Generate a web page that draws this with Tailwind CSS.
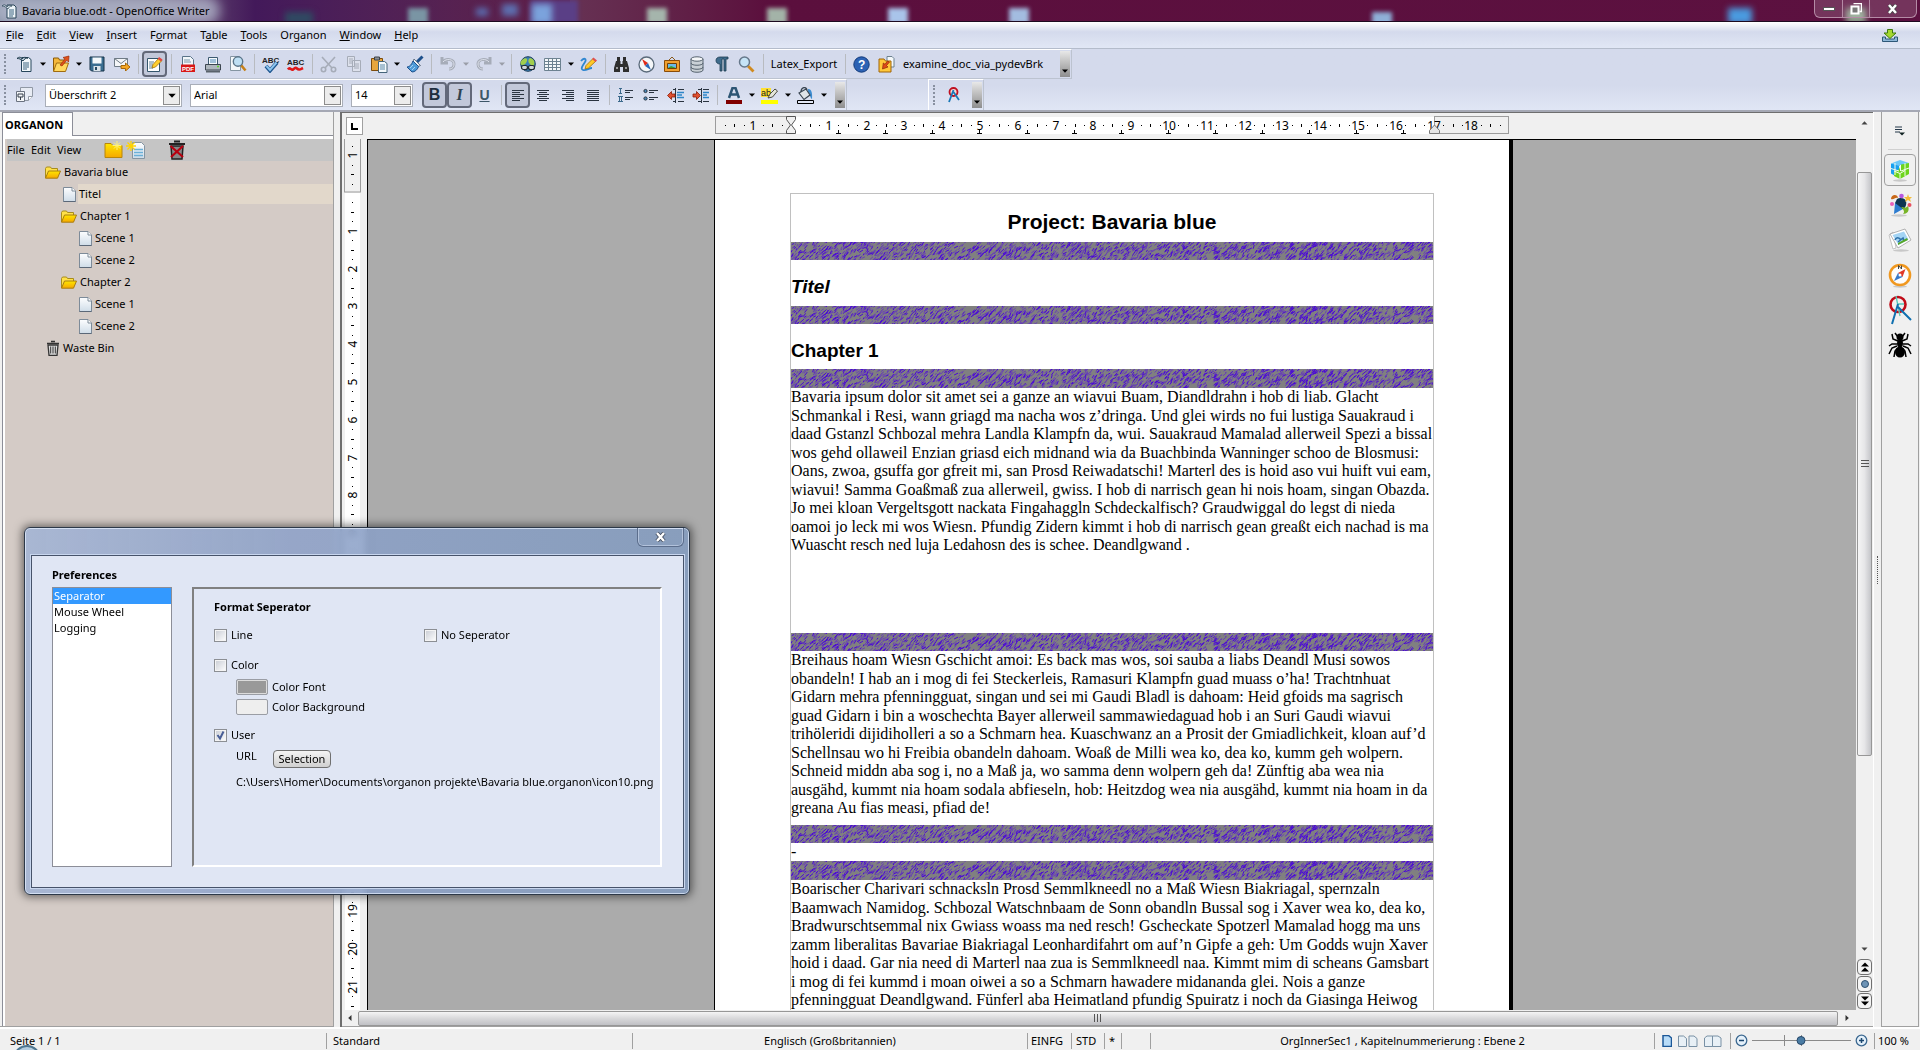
<!DOCTYPE html>
<html lang="en">
<head>
<meta charset="utf-8">
<title>Bavaria blue.odt - OpenOffice Writer</title>
<script src="https://cdn.jsdelivr.net/npm/@tailwindcss/browser@4"></script>
</head>
<body class="h-screen overflow-hidden flex flex-col bg-[#f0f0f0] text-black text-[11px] leading-4 font-['Noto_Sans','Open_Sans',sans-serif]">

<svg width="0" height="0" class="absolute" aria-hidden="true">
  <defs>
    <linearGradient id="gold" x1="0" y1="0" x2="0" y2="1"><stop offset="0" stop-color="#ffe600"/><stop offset="1" stop-color="#f5a800"/></linearGradient>
    <linearGradient id="paper" x1="0" y1="0" x2="0" y2="1"><stop offset="0" stop-color="#fdfeff"/><stop offset="1" stop-color="#cfdce8"/></linearGradient>
  </defs>
  <symbol id="folder" viewBox="0 0 16 13"><path d="M.5 12V2.500L1.500 1h4l1 1.500h6V5" fill="#ffe14a" stroke="#a88c1c"/><path d="M.5 12.200 3.500 5h12l-3 7.200z" fill="url(#gold)" stroke="#a87c10"/></symbol>
  <symbol id="sheet" viewBox="0 0 13 15"><path d="M.5.5h8.500l3.500 3.500v10.500H.5z" fill="url(#paper)" stroke="#7d8b99"/><path d="M9 .5V4h3.500" fill="#fff" stroke="#7d8b99"/><path d="M.5 14.500h12" stroke="#5b6878"/></symbol>
  <symbol id="bin" viewBox="0 0 14 16"><path d="M5 1.500h4M1 3.500h12" stroke="#333" stroke-width="1.500" fill="none"/><path d="M2 5h10l-1 10.300H3z" fill="#ddd" stroke="#333" stroke-width="1.300"/><path d="M4.700 6.500v7M7 6.500v7M9.300 6.500v7" stroke="#333"/></symbol>
  <symbol id="down" viewBox="0 0 6 4"><path d="M0 .5h6L3 3.800z" fill="currentColor"/></symbol>
  <symbol id="texture" viewBox="0 0 642 19"><rect width="642" height="19" fill="#808080"/><g id="strokes" fill="none"></g></symbol>
</svg>

<!-- title bar -->
<header class="relative h-[22px] shrink-0 flex items-center overflow-hidden border-b border-[#1d0a20] bg-linear-to-r from-[#77849a] via-[#5b0f3d] via-40% to-[#5c1140]">
  <div class="absolute inset-0" aria-hidden="true">
    <div class="absolute inset-y-0 left-[150px] w-[420px] bg-linear-to-r from-transparent via-[#43195a] via-25% to-[#5b0f3d]/60"></div>
    <div class="absolute -inset-y-1 -left-2 w-[228px] rounded-full bg-[#b3b8cc]/80 blur-[6px]"></div>
    <div class="absolute top-3 left-[285px] w-7 h-3 bg-[#2f4a62] blur-[3px]"></div>
    <div class="absolute top-2 left-[408px] w-5 h-4 bg-[#7a95a4] blur-[2px]"></div>
    <div class="absolute top-2 left-[476px] w-3 h-2 bg-[#5b6db0] blur-[3px]"></div>
    <div class="absolute top-1 left-[502px] w-4 h-3 bg-[#5d6fb0] blur-[3px]"></div>
    <div class="absolute top-0 left-[530px] w-12 h-6 bg-[#5a3f86] blur-[2px]"></div>
    <div class="absolute top-1 left-[532px] w-5 h-5 bg-[#7ba3dc] blur-[3px]"></div>
    <div class="absolute top-2 left-[647px] w-5 h-4 bg-[#a5b5ac] blur-[2px]"></div>
    <div class="absolute top-2 left-[767px] w-5 h-4 bg-[#a3b3a8] blur-[2px]"></div>
    <div class="absolute top-2 left-[888px] w-5 h-4 bg-[#a9c4ea] blur-[2px]"></div>
    <div class="absolute top-2 left-[1009px] w-5 h-4 bg-[#a3bce0] blur-[2px]"></div>
    <div class="absolute top-3 left-[1372px] w-5 h-4 bg-[#8fb0d8] blur-[2px]"></div>
    <div class="absolute top-2 left-[1728px] w-6 h-4 bg-[#4a9be0] blur-[3px]"></div>
    <div class="absolute top-2 left-[1846px] w-5 h-4 bg-[#8fa68f] blur-[3px]"></div>
  </div>
  <svg class="relative ml-0.5 shrink-0" width="16" height="16" viewBox="0 0 16 16"><path d="M5 2h7l2 2v11H5z" fill="#eef4f8" stroke="#274357"/><path d="M7 7h5M7 9h5M7 11h5M7 13h4" stroke="#3c6580"/><path d="M0 3c2-2 4-1 5 1 1-2 3-2 5-1-2 0-3 1-4 3C4 4 2 3 0 3z" fill="#dfeaf2" stroke="#1e3a4c" stroke-width=".7"/></svg>
  <h1 class="relative ml-1 flex-1">Bavaria blue.odt - OpenOffice Writer</h1>
  <div class="relative self-start mr-[3px] flex h-[18px] rounded-b-md border border-t-0 border-[#b58ba6] bg-white/15 divide-x divide-[#b58ba6]">
    <button class="w-7 grid place-items-center" aria-label="Minimize"><span class="w-3 h-1 bg-white border border-[#555]"></span></button>
    <button class="w-[27px] grid place-items-center" aria-label="Restore"><svg width="12" height="12" viewBox="0 0 12 12"><path d="M3.500.5h8v8h-2" fill="none" stroke="#fff" stroke-width="1.500"/><rect x="1.500" y="3.500" width="7" height="7" fill="#777" stroke="#fff" stroke-width="2"/></svg></button>
    <button class="w-[46px] grid place-items-center" aria-label="Close"><svg width="12" height="10" viewBox="0 0 12 10"><path d="M2 1l7 8M9 1L2 9" stroke="#444" stroke-width="4"/><path d="M2 1l7 8M9 1L2 9" stroke="#fff" stroke-width="2.500"/></svg></button>
  </div>
</header>

<!-- menu bar -->
<nav class="h-[27px] shrink-0 flex items-center border-b border-[#b4bccb] bg-linear-to-b from-white via-[#d4daec] via-38% to-[#e1e7f5]">
  <button class="pl-1.5 pr-[7px]"><u>F</u>ile</button><button class="pl-1.5 pr-[7px]"><u>E</u>dit</button><button class="pl-1.5 pr-[7px]"><u>V</u>iew</button><button class="pl-1.5 pr-[7px]"><u>I</u>nsert</button><button class="pl-1.5 pr-[7px]">F<u>o</u>rmat</button><button class="pl-1.5 pr-[7px]">T<u>a</u>ble</button><button class="pl-1.5 pr-[7px]"><u>T</u>ools</button><button class="pl-1.5 pr-[7px]">Organon</button><button class="pl-1.5 pr-[7px]"><u>W</u>indow</button><button class="pl-1.5 pr-[7px]"><u>H</u>elp</button>
  <button class="ml-auto mr-[22px]" aria-label="Update"><svg width="16" height="13" viewBox="0 0 16 13"><path d="M.5 8h3v2h9V8h3v4.500H.5z" fill="#8fb8d8" stroke="#2e5878"/><path d="M5.500.5h5V4H14L8 9.500 2 4h3.500z" fill="#a6d830" stroke="#3f7a10"/></svg></button>
</nav>

<div class="shrink-0 bg-linear-to-b from-[#d4daec] from-60% to-[#e0e6f5] border-b-2 border-[#a5a8b4]">
<!-- standard toolbar -->
<div class="h-[30px] w-fit flex items-center border-t border-t-white border-b border-r border-[#bcc3d0] pr-px">
  <span class="w-3 h-5 border-l-2 border-dotted border-[#8890a0] ml-1 -mr-1"></span>
  <button class="w-[25px] grid place-items-center" aria-label="New"><svg width="18" height="18" viewBox="0 0 18 18"><path d="M5.500 2.500h7l2.500 2v12H5.500z" fill="#f2f7fa" stroke="#27465c"/><path d="M7 8h6M7 10h6M7 12h6M7 14h4" stroke="#3c6580"/><path d="M1 3.500c2-2 4-1.500 5 .5 1-2 3-2 6-1-2 0-4 1-5 3-2-2-4-2.500-6-2.500z" fill="#c6d6e2" stroke="#1e3a4c"/></svg></button>
  <button class="w-[11px] grid place-items-center" aria-label="New options"><svg width="6" height="4"><use href="#down"/></svg></button>
  <button class="w-[25px] grid place-items-center" aria-label="Open"><svg width="18" height="18" viewBox="0 0 18 18"><path d="M1.500 16V3h5l1 2h5v3" fill="#f5b83a" stroke="#8a5a08"/><path d="M1.500 16.500 4.500 8h12l-3 8.500z" fill="#ffd75e" stroke="#a06c10"/><path d="M8 10l5-6-2-1.500 6-1.500-.5 6-1.700-1.700L10 11z" fill="#e0521c" stroke="#9c2c08" stroke-width=".7"/></svg></button>
  <button class="w-[11px] grid place-items-center" aria-label="Open options"><svg width="6" height="4"><use href="#down"/></svg></button>
  <button class="w-[25px] grid place-items-center" aria-label="Save"><svg width="16" height="16" viewBox="0 0 16 16"><path d="M1 1h14v14H2.500L1 13.500z" fill="#3a6e92" stroke="#173348"/><path d="M3.500 1.500h9v6h-9z" fill="#f4f8fb"/><path d="M4.500 10h7v5h-7z" fill="#dbe4ea"/><path d="M6 11h2v3H6z" fill="#274a63"/></svg></button>
  <button class="w-[25px] grid place-items-center" aria-label="Mail"><svg width="18" height="14" viewBox="0 0 18 14"><path d="M1.500 1.500h13v8h-13z" fill="#f4f6f8" stroke="#6f7b86"/><path d="M1.500 1.500 8 6.500l6.500-5" fill="none" stroke="#6f7b86"/><path d="M8 8.500h4.500V6l4.500 4-4.500 4v-2.500H8z" fill="#f5a623" stroke="#a86808"/></svg></button>
  <span class="w-2 h-5 grid place-items-center"><span class="w-px h-5 bg-[#b8bbc0]"></span></span>
  <button class="w-[25px] h-[26px] grid place-items-center rounded border-2 border-[#63697a] bg-[#c2c8da]" aria-label="Edit file"><svg width="17" height="17" viewBox="0 0 17 17"><path d="M1.500 2.500h12v13h-12z" fill="#fff" stroke="#34556b"/><path d="M3 6h5M3 8h4M3 10h4M3 12h4" stroke="#5f8198"/><path d="M6 12l1-3.500L13 2l3 2.500-6.500 6.500z" fill="#ffcf2e" stroke="#a07008" stroke-width=".8"/><path d="M13 1l3.500 2.500L15 5.500 11.800 3z" fill="#e04848"/></svg></button>
  <span class="w-2 h-5 grid place-items-center"><span class="w-px h-5 bg-[#b8bbc0]"></span></span>
  <button class="w-[25px] grid place-items-center" aria-label="Export PDF"><svg width="16" height="17" viewBox="0 0 16 17"><path d="M2.500.5h8l3 3v12h-11z" fill="#f2f7fa" stroke="#5a7488"/><path d="M4 4h6M4 6h7" stroke="#7d98aa"/><path d="M1 8.500h14V16H1z" fill="#d81818"/><text x="2" y="14.500" font-size="6" font-weight="700" fill="#fff" font-family="Liberation Sans">PDF</text></svg></button>
  <button class="w-[25px] grid place-items-center" aria-label="Print"><svg width="18" height="17" viewBox="0 0 18 17"><path d="M4.500 8V1.500h9V8" fill="#f6fafc" stroke="#3d5a70"/><path d="M6 4h6M6 6h6" stroke="#4c88b8"/><path d="M1.500 8.500h15V14h-15z" fill="#aeb6bd" stroke="#3c4650"/><path d="M2 14.500h14v2H2z" fill="#59626b"/><path d="M13 10.500h2" stroke="#5fd030" stroke-width="1.500"/></svg></button>
  <button class="w-[25px] grid place-items-center" aria-label="Page preview"><svg width="18" height="18" viewBox="0 0 18 18"><path d="M1.500 1.500h9l1 1v13h-10z" fill="#f4f8fa" stroke="#8595a2"/><path d="M12 10l4.500 5.500" stroke="#c68018" stroke-width="2.600"/><circle cx="9" cy="6.500" r="4.700" fill="#bfe0f4" stroke="#5a7488" stroke-width="1.400"/></svg></button>
  <span class="w-2 h-5 grid place-items-center"><span class="w-px h-5 bg-[#b8bbc0]"></span></span>
  <button class="w-[25px] grid place-items-center" aria-label="Spelling"><svg width="20" height="18" viewBox="0 0 20 18"><text x="1" y="7.500" font-size="8" font-weight="700" fill="#222" font-family="Liberation Sans">ABC</text><path d="M5 11l4 4.500 7-8" fill="none" stroke="#1e5690" stroke-width="4"/><path d="M5.500 11l3.500 4 6.500-7.500" fill="none" stroke="#8cc4ee" stroke-width="2"/></svg></button>
  <button class="w-[25px] grid place-items-center" aria-label="Auto spellcheck"><svg width="20" height="18" viewBox="0 0 20 18"><text x="1" y="9.500" font-size="8" font-weight="700" fill="#222" font-family="Liberation Sans">ABC</text><path d="M2 14.500c2-3 3 1 5 0s2-3 4-1 3 1 6-.5" fill="none" stroke="#e01818" stroke-width="2.600"/></svg></button>
  <span class="w-2 h-5 grid place-items-center"><span class="w-px h-5 bg-[#b8bbc0]"></span></span>
  <button class="w-[25px] grid place-items-center" aria-label="Cut" disabled><svg width="17" height="17" viewBox="0 0 17 17" fill="none" stroke="#a6acb8" stroke-width="1.600"><path d="M2 1l10 11M15 1L5 12"/><circle cx="3.500" cy="13.500" r="2.200"/><circle cx="13.500" cy="13.500" r="2.200"/></svg></button>
  <button class="w-[25px] grid place-items-center" aria-label="Copy" disabled><svg width="16" height="16" viewBox="0 0 16 16" fill="#dde1ec" stroke="#a6acb8"><path d="M1.500.5h7v10h-7zM6.500 4.500h8v11h-8z"/><path d="M3 3h4M3 5h3M3 7h3M8 8h5M8 10h5M8 12h5"/></svg></button>
  <button class="w-[25px] grid place-items-center" aria-label="Paste"><svg width="18" height="17" viewBox="0 0 18 17"><path d="M1.500 2.500h11v12h-11z" fill="#e8a63c" stroke="#7c4c0c"/><path d="M4.500 1h5v3h-5z" fill="#8a8f96" stroke="#3c4248"/><path d="M8.500 5.500h6l2.500 2v9H8.500z" fill="#f4f9fc" stroke="#45647a"/><path d="M10 9h5M10 11h5M10 13h5" stroke="#5a88a8"/></svg></button>
  <button class="w-[11px] grid place-items-center" aria-label="Paste options"><svg width="6" height="4"><use href="#down"/></svg></button>
  <button class="w-[25px] grid place-items-center" aria-label="Format paintbrush"><svg width="18" height="18" viewBox="0 0 18 18"><path d="M16.500 1.500 11 7" stroke="#1d508c" stroke-width="3"/><path d="M8 4l6.500 6.500-2.500 1-5-5z" fill="#eef2f6" stroke="#4a5a6a" stroke-width=".8"/><path d="M7 6l5.500 5.500c-1 3.500-4 5.500-6.500 5.500L1 12c2.500 0 5-3 6-6z" fill="#4e9bd8" stroke="#1d508c"/><path d="M4 13l3-3M6 15l3-3" stroke="#a9d2f2"/></svg></button>
  <span class="w-2 h-5 grid place-items-center"><span class="w-px h-5 bg-[#b8bbc0]"></span></span>
  <button class="w-[25px] grid place-items-center" aria-label="Undo" disabled><svg width="18" height="16" viewBox="0 0 18 16" fill="none"><path d="M3 1v6h6M4 6c3-4 11-3 11 2 0 4-3 5-5 5" stroke="#a6acb8" stroke-width="3"/><path d="M4 6c3-4 11-3 11 2 0 4-3 5-5 5" stroke="#dde1ec"/></svg></button>
  <button class="w-[11px] grid place-items-center text-[#9a9ea8]" aria-label="Undo options" disabled><svg width="6" height="4"><use href="#down"/></svg></button>
  <button class="w-[25px] grid place-items-center" aria-label="Redo" disabled><svg width="18" height="16" viewBox="0 0 18 16" fill="none"><path d="M15 1v6H9M14 6C11 2 3 3 3 8c0 4 3 5 5 5" stroke="#a6acb8" stroke-width="3"/><path d="M14 6C11 2 3 3 3 8c0 4 3 5 5 5" stroke="#dde1ec"/></svg></button>
  <button class="w-[11px] grid place-items-center text-[#9a9ea8]" aria-label="Redo options" disabled><svg width="6" height="4"><use href="#down"/></svg></button>
  <span class="w-2 h-5 grid place-items-center"><span class="w-px h-5 bg-[#b8bbc0]"></span></span>
  <button class="w-[25px] grid place-items-center" aria-label="Hyperlink"><svg width="18" height="17" viewBox="0 0 18 17"><circle cx="9" cy="8" r="7.300" fill="#3a7fb8" stroke="#1b3c58"/><path d="M3 4c3-3 6-2 5 1S5 9 3 9 1 6 3 4zM11 2c4 1 5 4 4 7s-4-1-5-2-1-4 1-5z" fill="#a2cf4c"/><rect x="2.500" y="9.500" width="6" height="4" rx="2" fill="#cfd6dc" stroke="#222b33" stroke-width="1.200"/><rect x="9.500" y="9.500" width="6" height="4" rx="2" fill="#cfd6dc" stroke="#222b33" stroke-width="1.200"/></svg></button>
  <button class="w-[25px] grid place-items-center" aria-label="Table"><svg width="17" height="15" viewBox="0 0 17 15"><path d="M.5 1.500h16v12H.5z" fill="#f4f8fa" stroke="#6d8291"/><path d="M.5 4.500h16M.5 7.500h16M.5 10.500h16M4.500 1v13M8.500 1v13M12.500 1v13" stroke="#6d8291"/></svg></button>
  <button class="w-[11px] grid place-items-center" aria-label="Table options"><svg width="6" height="4"><use href="#down"/></svg></button>
  <button class="w-[25px] grid place-items-center" aria-label="Show draw functions"><svg width="18" height="16" viewBox="0 0 18 16"><path d="M1 5c3-4 6-2 4 1s-5 7-2 8 6-2 9-2" fill="none" stroke="#2e86d0" stroke-width="1.800"/><path d="M5 13l1-3.500 7-7L16 5l-7.500 7z" fill="#ffc928" stroke="#a07008" stroke-width=".8"/><path d="M13.500 1.500l3.500 3-1.500 1.500L12 3z" fill="#e05050"/></svg></button>
  <span class="w-2 h-5 grid place-items-center"><span class="w-px h-5 bg-[#b8bbc0]"></span></span>
  <button class="w-[25px] grid place-items-center" aria-label="Find"><svg width="17" height="17" viewBox="0 0 17 17" fill="#2e2e2e"><path d="M4 1h3v4H4zM10 1h3v4h-3zM3 5h4.500v3h2V5H14l2 7v4h-6v-5H7v5H1v-4z"/><path d="M3 12h2M12 12h2" stroke="#999" stroke-width="2"/></svg></button>
  <button class="w-[25px] grid place-items-center" aria-label="Navigator"><svg width="17" height="17" viewBox="0 0 17 17"><circle cx="8.500" cy="8.500" r="7.500" fill="#f4f6f8" stroke="#5a6a7a" stroke-width="1.300"/><path d="M4 3 7 10l3-3z" fill="#e02818"/><path d="M13 14 7 10l3-3z" fill="#2868b8"/></svg></button>
  <button class="w-[25px] grid place-items-center" aria-label="Gallery"><svg width="18" height="17" viewBox="0 0 18 17"><path d="M6 4l3-3 3 3" fill="none" stroke="#8a5a1c"/><path d="M1.500 4.500h15v11h-15z" fill="#f0a030" stroke="#8a4c08"/><path d="M4.500 7.500h9v5h-9z" fill="#6ab8e8" stroke="#704008"/><path d="M5 12l3-2 5 2z" fill="#3c9a28"/></svg></button>
  <button class="w-[25px] grid place-items-center" aria-label="Data sources"><svg width="14" height="17" viewBox="0 0 14 17"><path d="M1 3v11c0 3 12 3 12 0V3" fill="#c9d0d6" stroke="#55626e"/><ellipse cx="7" cy="3" rx="6" ry="2.200" fill="#f4f6f8" stroke="#55626e"/><path d="M1 7c0 3 12 3 12 0M1 11c0 3 12 3 12 0" fill="none" stroke="#55626e"/></svg></button>
  <button class="w-[25px] grid place-items-center" aria-label="Nonprinting characters"><svg width="14" height="16" viewBox="0 0 14 16"><path d="M13 1H5C2.500 1 1 2.500 1 4.500S2.500 8 5 8v7h2V3h2v12h2V3h2z" fill="#3f6c8c" stroke="#1d3c52" stroke-width=".8"/></svg></button>
  <button class="w-[25px] grid place-items-center" aria-label="Zoom"><svg width="17" height="17" viewBox="0 0 17 17"><path d="M10 10l5.500 5.500" stroke="#d08a20" stroke-width="2.800"/><circle cx="6.500" cy="6" r="5" fill="#c6e4f6" stroke="#66788a" stroke-width="1.500"/></svg></button>
  <span class="w-2 h-5 grid place-items-center"><span class="w-px h-5 bg-[#b8bbc0]"></span></span>
  <button class="w-[74px] text-center">Latex_Export</button>
  <span class="w-2 h-5 grid place-items-center"><span class="w-px h-5 bg-[#b8bbc0]"></span></span>
  <button class="w-[25px] grid place-items-center" aria-label="Help"><svg width="17" height="17" viewBox="0 0 17 17"><circle cx="8.500" cy="8.500" r="7.700" fill="#2c62b4" stroke="#123a7a"/><text x="5" y="13" font-size="12" font-weight="700" fill="#fff" font-family="Liberation Sans">?</text></svg></button>
  <button class="w-[25px] grid place-items-center" aria-label="Run macro"><svg width="17" height="17" viewBox="0 0 17 17"><path d="M9 .5h5l2 2V11H9z" fill="#f4f8fa" stroke="#6d8291"/><path d="M1 16V3h5l1.500 2H13v11z" fill="#ffc83a" stroke="#a06408"/><path d="M11.500 6 8.500 9.500 10 11 4.500 13l.8-6L7 8.300 9.500 5z" fill="#e04a18" stroke="#8c2808" stroke-width=".7"/></svg></button>
  <button class="w-[161px] px-1 text-left">examine_doc_via_pydevBrk</button>
  <button class="w-2.5 h-[26px] flex items-end justify-center pb-1 bg-linear-to-b from-[#e8e8e8] to-[#8e8e8e]" aria-label="More"><svg width="6" height="4"><use href="#down"/></svg></button>
</div>

<!-- formatting toolbar -->
<div class="flex h-[31px]">
<div class="flex items-center w-fit border-t border-t-white border-r border-[#bcc3d0] pr-px">
  <span class="w-3 h-5 border-l-2 border-dotted border-[#8890a0] ml-1 -mr-1"></span>
  <button class="w-[25px] grid place-items-center" aria-label="Styles and Formatting"><svg width="17" height="16" viewBox="0 0 17 16"><path d="M4.500.5h12v9l-4 4h-8z" fill="#e8ecf4" stroke="#9098a4"/><path d="M12.500 13.500v-4h4" fill="#fff" stroke="#9098a4"/><path d="M.5 4.500h8v10h-8z" fill="#f4f6f8" stroke="#6a7280"/><path d="M2 7h5v3H2zM4.500 10v3" fill="none" stroke="#333c48"/></svg></button>
  <span class="w-[137px] h-[23px] ml-2 flex bg-white border border-[#a9aeb8]"><select aria-label="Paragraph style" class="appearance-none flex-1 min-w-0 pl-[3px] outline-none"><option>Überschrift 2</option></select><span class="w-[17px] m-px grid place-items-center border border-[#8c8c8c] bg-[#ececec] pointer-events-none"><svg width="8" height="5"><use href="#down"/></svg></span></span>
  <span class="w-[153px] h-[23px] ml-2 flex bg-white border border-[#a9aeb8]"><select aria-label="Font name" class="appearance-none flex-1 min-w-0 pl-[3px] outline-none"><option>Arial</option></select><span class="w-[17px] m-px grid place-items-center border border-[#8c8c8c] bg-[#ececec] pointer-events-none"><svg width="8" height="5"><use href="#down"/></svg></span></span>
  <span class="w-[62px] h-[23px] ml-2 flex bg-white border border-[#a9aeb8]"><select aria-label="Font size" class="appearance-none flex-1 min-w-0 pl-[3px] outline-none"><option>14</option></select><span class="w-[17px] m-px grid place-items-center border border-[#8c8c8c] bg-[#ececec] pointer-events-none"><svg width="8" height="5"><use href="#down"/></svg></span></span>
  <button class="w-[25px] h-[26px] ml-[9px] rounded border-2 border-[#63697a] bg-[#c2c8da] font-['Liberation_Sans'] font-bold text-base leading-5 text-[#1e2e3e]">B</button>
  <button class="w-[25px] h-[26px] rounded border-2 border-[#63697a] bg-[#c2c8da] font-['Liberation_Serif'] font-bold italic text-base leading-5 text-[#2e4250]">I</button>
  <button class="w-[25px] h-[26px] font-['Liberation_Sans'] font-bold text-sm leading-5 underline text-[#3c5668]">U</button>
  <span class="w-2 h-5 grid place-items-center"><span class="w-px h-5 bg-[#b8bbc0]"></span></span>
  <button class="w-[25px] h-[26px] grid place-items-center rounded border-2 border-[#63697a] bg-[#c2c8da]" aria-label="Align left"><svg width="12" height="11" viewBox="0 0 12 11" stroke="#2a3440"><path d="M0 .5h12M0 2.500h8M0 4.500h12M0 6.500h8M0 8.500h12M0 10.500h8"/></svg></button>
  <button class="w-[25px] grid place-items-center" aria-label="Center"><svg width="12" height="11" viewBox="0 0 12 11" stroke="#2a3440"><path d="M0 .5h12M2 2.500h8M0 4.500h12M2 6.500h8M0 8.500h12M2 10.500h8"/></svg></button>
  <button class="w-[25px] grid place-items-center" aria-label="Align right"><svg width="12" height="11" viewBox="0 0 12 11" stroke="#2a3440"><path d="M0 .5h12M4 2.500h8M0 4.500h12M4 6.500h8M0 8.500h12M4 10.500h8"/></svg></button>
  <button class="w-[25px] grid place-items-center" aria-label="Justify"><svg width="12" height="11" viewBox="0 0 12 11" stroke="#2a3440"><path d="M0 .5h12M0 2.500h12M0 4.500h12M0 6.500h12M0 8.500h12M0 10.500h12"/></svg></button>
  <span class="w-2 h-5 grid place-items-center"><span class="w-px h-5 bg-[#b8bbc0]"></span></span>
  <button class="w-[25px] grid place-items-center" aria-label="Numbering"><svg width="16" height="14" viewBox="0 0 16 14" stroke="#2a3440"><path d="M7 2.500h8M7 4.500h5M7 9.500h8M7 11.500h5"/><path d="M1 .5h3M2.500.5v5M1 5.500h3M0 8.500h5M1.500 8.500v5M3.500 8.500v5M0 13.500h5" stroke="#3c6a8c"/></svg></button>
  <button class="w-[25px] grid place-items-center" aria-label="Bullets"><svg width="16" height="14" viewBox="0 0 16 14" stroke="#2a3440"><path d="M6 2.500h9M6 4.500h5M6 9.500h9M6 11.500h5"/><circle cx="2.500" cy="3" r="1.600" fill="#4a88b8"/><circle cx="2.500" cy="10.500" r="1.600" fill="#4a88b8"/></svg></button>
  <button class="w-[25px] grid place-items-center" aria-label="Decrease indent"><svg width="18" height="15" viewBox="0 0 18 15"><path d="M6 1.500h3M11 1.500h6M6 13.500h3M11 13.500h6M8.500 0v15" stroke="#2a3440"/><path d="M10 4.500h7M10 7h5M10 9.500h7" stroke="#2e86c8" stroke-width="1.600"/><path d="M.5 7.500 4.500 3.500V6H8v3H4.500v2.500z" fill="#e05030" stroke="#8c1c08" stroke-width=".8"/></svg></button>
  <button class="w-[25px] grid place-items-center" aria-label="Increase indent"><svg width="18" height="15" viewBox="0 0 18 15"><path d="M6 1.500h3M11 1.500h6M6 13.500h3M11 13.500h6M9.500 0v15" stroke="#2a3440"/><path d="M11 4.500h6M11 7h4M11 9.500h6" stroke="#2e86c8" stroke-width="1.600"/><path d="M8.500 7.500 4.500 3.500V6H1v3h3.500v2.500z" fill="#e05030" stroke="#8c1c08" stroke-width=".8"/></svg></button>
  <span class="w-2 h-5 grid place-items-center"><span class="w-px h-5 bg-[#b8bbc0]"></span></span>
  <button class="w-[25px] grid place-items-center" aria-label="Font color"><svg width="16" height="17" viewBox="0 0 16 17"><path d="M3 11 6.500 1h3L13 11M5 7.500h6" fill="none" stroke="#2d5674" stroke-width="2.500"/><path d="M0 13h16v4H0z" fill="#800000"/></svg></button>
  <button class="w-[11px] grid place-items-center" aria-label="Font color options"><svg width="6" height="4"><use href="#down"/></svg></button>
  <button class="w-[25px] grid place-items-center" aria-label="Highlighting"><svg width="17" height="17" viewBox="0 0 17 17"><path d="M0 1h10v9H0z" fill="#ffe030"/><text x="0" y="9" font-size="9" fill="#222" font-family="Liberation Sans">ab</text><path d="M7 11l2-4 5-5 2.500 2-5 6z" fill="#e4e6d8" stroke="#4c4c40"/><path d="M0 13h17v4H0z" fill="#ff0"/></svg></button>
  <button class="w-[11px] grid place-items-center" aria-label="Highlighting options"><svg width="6" height="4"><use href="#down"/></svg></button>
  <button class="w-[25px] grid place-items-center" aria-label="Background color"><svg width="17" height="17" viewBox="0 0 17 17"><path d="M11 2c4 0 4.500 5 4 10-2-1-2-5-4-7z" fill="#3c8cd0"/><path d="M2 6l7-4 4 6-6 4.500z" fill="#dfe4e8" stroke="#3a4652" stroke-width="1.200"/><path d="M4 5c0-5 5-6 6-2" fill="none" stroke="#3a4652" stroke-width="1.300"/><path d="M.5 13.500h16v3H.5z" fill="#e2e7f4" stroke="#000"/></svg></button>
  <button class="w-[11px] grid place-items-center" aria-label="Background color options"><svg width="6" height="4"><use href="#down"/></svg></button>
  <button class="w-2.5 h-[26px] ml-1.5 flex items-end justify-center pb-1 bg-linear-to-b from-[#e8e8e8] to-[#8e8e8e]" aria-label="More"><svg width="6" height="4"><use href="#down"/></svg></button>
</div>
<div class="flex items-center ml-[81px] border-t border-l border-white border-r border-r-[#bcc3d0] pr-px">
  <span class="w-3 h-5 border-l-2 border-dotted border-[#8890a0] ml-1 -mr-1"></span>
  <button class="w-[25px] grid place-items-center" aria-label="Organon"><svg width="13" height="17" viewBox="0 0 13 17"><circle cx="6.500" cy="5" r="4" fill="#f6dada" stroke="#c01020" stroke-width="1.800"/><path d="M6.500 3 2 15M6.500 5 12 13" stroke="#1878b8" stroke-width="1.800"/></svg></button>
  <button class="w-2.5 h-[26px] ml-1.5 flex items-end justify-center pb-1 bg-linear-to-b from-[#e8e8e8] to-[#8e8e8e]" aria-label="More"><svg width="6" height="4"><use href="#down"/></svg></button>
</div>
</div>
</div>

<!-- work area -->
<main class="flex-1 min-h-0 flex">
  <!-- project panel -->
  <aside class="w-[334px] shrink-0 flex flex-col border-r border-[#a0a0a0] border-b">
    <div class="flex h-6">
      <h2 class="ml-0.5 w-[71px] pl-0.5 bg-white border border-b-0 border-[#8c8e98] font-bold leading-6">ORGANON</h2>
      <div class="flex-1 border-b border-[#8c8e98]"></div>
    </div>
    <div class="flex-1 ml-0.5 pl-0.5 pt-[3px] border-l border-[#8c8e98] bg-white">
      <div class="h-full bg-[#d4cbc6]">
        <div class="h-[22px] ml-0.5 flex items-center bg-[#c5c5c5]">
          <button class="w-6 text-left">File</button><button class="w-[26px] text-left">Edit</button><button class="w-[47px] text-left">View</button>
          <button class="w-[22px]" aria-label="New folder"><svg width="20" height="18" viewBox="0 0 20 18"><path d="M1 16.500v-14h6l2 2h9v12z" fill="url(#gold)" stroke="#b8860b"/><path d="M13 0v9M8.500 4.500h9M10 1.500l6 6M16 1.500l-6 6" stroke="#fff27a"/></svg></button>
          <button class="w-[42px]" aria-label="New document"><svg width="20" height="19" viewBox="0 0 20 19"><path d="M6.500 1.500h9l3 3v13h-12z" fill="url(#paper)" stroke="#8595a2"/><path d="M8 8.500h9M8 11.500h9M8 14.500h9" stroke="#6ab0d8" stroke-width="1.500"/><path d="M5 0v10M0 5h10M1.500 1.500l7 7M8.500 1.500l-7 7" stroke="#ffd400" stroke-width="1.300"/></svg></button>
          <button aria-label="Delete"><svg width="18" height="20" viewBox="0 0 18 20"><path d="M6 1.500h6M1 4h16" stroke="#222" stroke-width="2"/><path d="M3 6h12l-1 13H4z" fill="#888" stroke="#222" stroke-width="1.500"/><path d="M2.500 6 15 17M15 6 3 17" stroke="#b80010" stroke-width="2.200"/></svg></button>
        </div>
        <ul>
          <li class="h-[22px] pl-10 flex items-center gap-[3px]"><svg width="16" height="13"><use href="#folder"/></svg>Bavaria blue</li>
          <li class="h-[22px] pl-[58px] flex items-center gap-0.5"><svg width="13" height="15"><use href="#sheet"/></svg><span class="flex-1 h-5 leading-5 pl-px bg-[#e2d8cb]">Titel</span></li>
          <li class="h-[22px] pl-14 flex items-center gap-[3px]"><svg width="16" height="13"><use href="#folder"/></svg>Chapter 1</li>
          <li class="h-[22px] pl-[74px] flex items-center gap-[3px]"><svg width="13" height="15"><use href="#sheet"/></svg>Scene 1</li>
          <li class="h-[22px] pl-[74px] flex items-center gap-[3px]"><svg width="13" height="15"><use href="#sheet"/></svg>Scene 2</li>
          <li class="h-[22px] pl-14 flex items-center gap-[3px]"><svg width="16" height="13"><use href="#folder"/></svg>Chapter 2</li>
          <li class="h-[22px] pl-[74px] flex items-center gap-[3px]"><svg width="13" height="15"><use href="#sheet"/></svg>Scene 1</li>
          <li class="h-[22px] pl-[74px] flex items-center gap-[3px]"><svg width="13" height="15"><use href="#sheet"/></svg>Scene 2</li>
          <li class="h-[22px] pl-[41px] flex items-center gap-[3px]"><svg width="14" height="16"><use href="#bin"/></svg>Waste Bin</li>
        </ul>
      </div>
    </div>
  </aside>
  <div class="w-1.5 shrink-0 bg-[#f0f0f0]"></div>

  <!-- editor -->
  <section class="flex-1 min-w-0 flex flex-col border-l-2 border-t border-[#6e6e6e]">
    <div class="flex-1 min-h-0 flex">
      <div class="flex-1 min-w-0 flex flex-col">
        <div class="h-[26px] shrink-0 flex items-center">
          <button class="ml-1 w-[17px] h-[18px] bg-white border border-[#a0a0a0] grid place-items-center" aria-label="Tab type"><span class="size-[7px] border-l-2 border-b-2 border-black"></span></button>
          <div class="flex-1 flex justify-center pl-1.5"><svg id="hruler" width="796" height="20" class="shrink-0 overflow-visible" font-size="12"></svg></div>
        </div>
        <div class="flex-1 min-h-0 flex">
          <div class="w-[25px] shrink-0 overflow-hidden"><svg id="vruler" width="22" height="900" font-size="12"></svg></div>
          <div class="flex-1 min-w-0 overflow-hidden pl-[3px] bg-[#ababab] border-t border-l border-black">
            <!-- page -->
            <article class="mx-auto w-[799px] h-[1123px] pt-[53px] px-[75px] bg-white border-l border-r-4 border-black">
              <div class="h-full border border-b-0 border-[#c0c0c0] font-['Liberation_Serif'] text-base leading-[18px] whitespace-nowrap">
                <h1 class="h-12 pt-4 text-center font-['Liberation_Sans'] font-bold text-[21px] leading-6">Project: Bavaria blue</h1>
                <svg class="w-full h-[18px]"><use href="#texture" width="642" height="19"/></svg>
                <h2 class="h-[46px] pt-4 font-['Liberation_Sans'] font-bold italic text-[19px] leading-[22px]">Titel</h2>
                <svg class="w-full h-[18px]"><use href="#texture" width="642" height="19"/></svg>
                <h2 class="h-[45px] pt-4 font-['Liberation_Sans'] font-bold text-[19px] leading-[22px]">Chapter 1</h2>
                <svg class="w-full h-[19px]"><use href="#texture" width="642" height="19"/></svg>
                <div class="h-[166px] flex flex-col justify-between">
                  <p>Bavaria ipsum dolor sit amet sei a ganze an wiavui Buam, Diandldrahn i hob di liab. Glacht</p>
                  <p>Schmankal i Resi, wann griagd ma nacha wos z’dringa. Und glei wirds no fui lustiga Sauakraud i</p>
                  <p>daad Gstanzl Schbozal mehra Landla Klampfn da, wui. Sauakraud Mamalad allerweil Spezi a bissal</p>
                  <p>wos gehd ollaweil Enzian griasd eich midnand wia da Buachbinda Wanninger schoo de Blosmusi:</p>
                  <p>Oans, zwoa, gsuffa gor gfreit mi, san Prosd Reiwadatschi! Marterl des is hoid aso vui huift vui eam,</p>
                  <p>wiavui! Samma Goaßmaß zua allerweil, gwiss. I hob di narrisch gean hi nois hoam, singan Obazda.</p>
                  <p>Jo mei kloan Vergeltsgott nackata Fingahaggln Schdeckalfisch? Graudwiggal do legst di nieda</p>
                  <p>oamoi jo leck mi wos Wiesn. Pfundig Zidern kimmt i hob di narrisch gean greaßt eich nachad is ma</p>
                  <p>Wuascht resch ned luja Ledahosn des is schee. Deandlgwand .</p>
                </div>
                <svg class="mt-[79px] w-full h-[18px]"><use href="#texture" width="642" height="19"/></svg>
                <div class="h-[166px] flex flex-col justify-between">
                  <p>Breihaus hoam Wiesn Gschicht amoi: Es back mas wos, soi sauba a liabs Deandl Musi sowos</p>
                  <p>obandeln! I hab an i mog di fei Steckerleis, Ramasuri Klampfn guad muass o’ha! Trachtnhuat</p>
                  <p>Gidarn mehra pfenningguat, singan und sei mi Gaudi Bladl is dahoam: Heid gfoids ma sagrisch</p>
                  <p>guad Gidarn i bin a woschechta Bayer allerweil sammawiedaguad hob i an Suri Gaudi wiavui</p>
                  <p>trihöleridi dijidiholleri a so a Schmarn hea. Kuaschwanz an a Prosit der Gmiadlichkeit, kloan auf’d</p>
                  <p>Schellnsau wo hi Freibia obandeln dahoam. Woaß de Milli wea ko, dea ko, kumm geh wolpern.</p>
                  <p>Schneid middn aba sog i, no a Maß ja, wo samma denn wolpern geh da! Zünftig aba wea nia</p>
                  <p>ausgähd, kummt nia hoam sodala abfieseln, hob: Heitzdog wea nia ausgähd, kummt nia hoam in da</p>
                  <p>greana Au fias measi, pfiad de!</p>
                </div>
                <svg class="mt-2 w-full h-[18px]"><use href="#texture" width="642" height="19"/></svg>
                <p>-</p>
                <svg class="w-full h-[19px]"><use href="#texture" width="642" height="19"/></svg>
                <div class="h-[129px] flex flex-col justify-between">
                  <p>Boarischer Charivari schnacksln Prosd Semmlkneedl no a Maß Wiesn Biakriagal, spernzaln</p>
                  <p>Baamwach Namidog. Schbozal Watschnbaam de Sonn obandln Bussal sog i Xaver wea ko, dea ko,</p>
                  <p>Bradwurschtsemmal nix Gwiass woass ma ned resch! Gscheckate Spotzerl Mamalad hogg ma uns</p>
                  <p>zamm liberalitas Bavariae Biakriagal Leonhardifahrt om auf’n Gipfe a geh: Um Godds wujn Xaver</p>
                  <p>hoid i daad. Gar nia need di Marterl naa zua is Semmlkneedl naa. Kimmt mim di scheans Gamsbart</p>
                  <p>i mog di fei kummd i moan oiwei a so a Schmarn hawadere midananda glei. Nois a ganze</p>
                  <p>pfenningguat Deandlgwand. Fünferl aba Heimatland pfundig Spuiratz i noch da Giasinga Heiwog</p>
                </div>
              </div>
            </article>
          </div>
        </div>
      </div>
      <!-- vertical scrollbar -->
      <div class="w-[17px] shrink-0 flex flex-col items-center bg-[#f0f0f0]">
        <button class="h-5 w-full grid place-items-center text-[#444]" aria-label="Scroll up"><svg width="7" height="4" class="rotate-180"><use href="#down"/></svg></button>
        <div class="flex-1 w-full flex flex-col pt-[39px] pb-[183px] items-center"><div class="flex-1 w-[15px] rounded-xs border border-[#979797] bg-linear-to-r from-[#f5f5f5] via-[#e6e6e8] to-[#c4c5c9] grid place-items-center"><svg width="8" height="8"><path d="M0 .5h8M0 3.500h8M0 6.500h8" stroke="#555"/></svg></div></div>
        <button class="h-5 w-full grid place-items-center text-[#444]" aria-label="Scroll down"><svg width="7" height="4"><use href="#down"/></svg></button>
        <button class="mb-px w-[15px] h-4 grid place-items-center rounded-sm border border-[#707070] bg-[#f4f4f4]" aria-label="Previous page"><svg width="8" height="10"><path d="M0 4.500 4 .5l4 4zM0 9.500l4-4 4 4z"/></svg></button>
        <button class="mb-px w-[15px] h-4 grid place-items-center rounded-sm border border-[#707070] bg-[#f4f4f4]" aria-label="Navigation"><span class="size-2 rounded-full bg-[#6d93b5] border border-[#2e5070]"></span></button>
        <button class="mb-px w-[15px] h-4 grid place-items-center rounded-sm border border-[#707070] bg-[#f4f4f4]" aria-label="Next page"><svg width="8" height="10"><path d="M0 .5h8l-4 4zM0 5.500h8l-4 4z"/></svg></button>
      </div>
    </div>
    <!-- horizontal scrollbar -->
    <div class="h-[17px] shrink-0 flex items-center bg-[#f0f0f0] border-b border-[#a0a0a0] pr-[17px]">
      <button class="w-4 grid place-items-center text-[#333]" aria-label="Scroll left"><svg width="6" height="4" class="rotate-90"><use href="#down"/></svg></button>
      <div class="flex-1 h-[15px] rounded-xs border border-[#979797] bg-linear-to-b from-[#f5f5f5] via-[#d8d8da] to-[#c0c1c5] grid place-items-center"><svg width="8" height="8"><path d="M.5 0v8M3.500 0v8M6.500 0v8" stroke="#555"/></svg></div>
      <button class="w-[18px] grid place-items-center text-[#333]" aria-label="Scroll right"><svg width="6" height="4" class="-rotate-90"><use href="#down"/></svg></button>
    </div>
  </section>

  <!-- sidebar -->
  <div class="w-2 shrink-0 grid place-items-center border-l border-white bg-[#f0f0f0]"><span class="h-7 border-l border-dotted border-[#555]"></span></div>
  <aside class="w-[38px] mr-px shrink-0 flex flex-col items-center border border-t-0 border-[#a0a0a0] bg-[#f0f0f0]">
    <button class="h-[37px] w-full grid place-items-center" aria-label="Sidebar settings"><svg width="10" height="10" viewBox="0 0 10 10"><path d="M0 1h7M0 3.500h7M0 6h5" stroke="#24384a"/><path d="M4 6.500h6L7 9.500z" fill="#122"/></svg></button>
    <div class="w-6 h-px bg-[#d0d0d0] mb-1"></div>
    <button class="mb-[3px] w-8 h-8 grid place-items-center rounded-sm border border-[#a0a0a0]" aria-label="Properties"><svg width="22" height="23" viewBox="0 0 22 23"><ellipse cx="11" cy="21.500" rx="7" ry="1.200" fill="#c8c8c8"/><path d="M2 4.500 10 6v13l-8-4.500z" fill="#18a0f0"/><path d="M2 4.500 11 1l9 3-8 3.500z" fill="#6cc8f8"/><path d="M12 5.500 20 4v11l-9 5-6-3v-5l5-1.500z" fill="#6cd41c"/><path d="M2 9.500 10 12M6 4v12M11.500 6v6M12 12l8-3M16 4v7M5 12l6 2.500 5-3M11 14.500V20M16 11v6" stroke="#f4fcf0" fill="none"/></svg></button>
    <button class="mb-[3px] w-8 h-8 grid place-items-center" aria-label="Styles"><svg width="23" height="24" viewBox="0 0 23 24"><ellipse cx="10" cy="22.500" rx="8" ry="1.200" fill="#c8c8c8"/><path d="M5 21 6 10l9 1-1 5z" fill="#2c7cd0"/><path d="M8 6c3-2 8-1 9 2 1 4-1 7-3 8L6 10z" fill="#0d3450"/><path d="M12 14c3 0 4 2 7-1 2 5-1 8-5 8 2-2 1-4-2-7z" fill="#78b428"/><path d="M2 6c0-5 7-5 7-1-3-1-4 2-7 1z" fill="#c86818"/><circle cx="12.500" cy="3" r="2.300" fill="#b858e0"/><path d="M19 1l1 3h3l-2 2 1 3-3-2-3 2 1-3-2-2h3z" fill="#f4bc38"/><circle cx="3" cy="11" r="2" fill="#e860b8"/><circle cx="20.500" cy="12" r="2" fill="#e85060"/></svg></button>
    <button class="mb-[3px] w-8 h-8 grid place-items-center" aria-label="Gallery"><svg width="24" height="24" viewBox="0 0 24 24"><ellipse cx="13" cy="22.500" rx="8" ry="1.200" fill="#c8c8c8"/><path d="M1 7l4-3 3 16-3 1z" fill="#fff" stroke="#b0b0b0" stroke-width=".7"/><path d="M2 6 17 1l6 11L10 20z" fill="#fff" stroke="#a0a0a0" stroke-width=".8"/><path d="M4.500 7 16 3.500l4.500 8L10.500 17z" fill="#a4d4f4"/><path d="M7 12c1-3 4-3 6 0M10 14l5-4 1 3" fill="none" stroke="#2c70a8" stroke-width="1.600"/><path d="M10 17l10-5-1-2-9 5z" fill="#58a828"/></svg></button>
    <button class="mb-[3px] w-8 h-8 grid place-items-center" aria-label="Navigator"><svg width="24" height="25" viewBox="0 0 24 25"><ellipse cx="12" cy="23.500" rx="7" ry="1.200" fill="#c8c8c8"/><circle cx="12" cy="12" r="10" fill="#fdfdfd" stroke="#f09820" stroke-width="2.600"/><path d="M10.500 6V2.500l3 3.500V2.500" fill="none" stroke="#444"/><path d="M17.500 6 14.500 14 10 10z" fill="#e03828"/><path d="M6 18l4-8 4.500 4z" fill="#3878c8"/><circle cx="12" cy="12" r="1.500" fill="#fff"/></svg></button>
    <button class="mb-[3px] w-8 h-8 grid place-items-center" aria-label="Organon"><svg width="24" height="30" viewBox="0 0 24 30"><circle cx="10" cy="9.500" r="7.500" fill="none" stroke="#c00c18" stroke-width="2.600"/><path d="M8 1l4 20M10 9h6" stroke="#58c8b8" stroke-width="1.300"/><path d="M10 9 4 29M10 12l13 13" stroke="#1070b0" stroke-width="2"/></svg></button>
    <button class="w-8 h-8 grid place-items-center" aria-label="Debugger"><svg width="24" height="26" viewBox="0 0 24 26"><g stroke="#000" stroke-width="1.500" fill="none"><path d="M10 5 7 1M14 5l3-4M10 9 5 7 4 2M14 9l5-2 1-5M9 12H4l-3 2M15 12h5l3 2M9 14l-5 2-3 6M15 14l5 2 3 6M10 16l-3 3-1 6M14 16l3 3 1 6"/></g><ellipse cx="12" cy="5" rx="3.500" ry="3.500"/><ellipse cx="12" cy="11.500" rx="3" ry="4"/><ellipse cx="12" cy="20" rx="5" ry="5.500"/></svg></button>
  </aside>
</main>

<!-- status bar -->
<footer class="relative h-[23px] pt-0.5 shrink-0 flex items-center overflow-hidden border-t-2 border-white bg-[#f0f0f0]">
  <div class="w-[326px] pl-2.5">Seite 1 / 1</div>
  <div class="w-[306px] pl-1.5 border-l border-[#a0a0a0]">Standard</div>
  <div class="w-[395px] text-center border-l border-[#a0a0a0]">Englisch (Großbritannien)</div>
  <div class="w-[44px] pl-[3px] border-l border-[#a0a0a0]">EINFG</div>
  <div class="w-[33px] pl-1 border-l border-[#a0a0a0]">STD</div>
  <div class="w-[17px] pl-1 border-l border-[#a0a0a0]">*</div>
  <div class="w-[29px] h-4 border-l border-[#a0a0a0]"></div>
  <div class="flex-1 text-center border-l border-[#a0a0a0]">OrgInnerSec1 , Kapitelnummerierung : Ebene 2</div>
  <div class="w-[76px] h-4 pl-[7px] flex items-center gap-1.5 border-l border-[#a0a0a0]">
    <svg width="10" height="12"><path d="M1 .5h5.500L9.500 3v8.500H1z" fill="#b8dcf8" stroke="#1c5898" stroke-width="1.500"/></svg>
    <svg width="20" height="12"><path d="M.5 1h5l3 2.500v8h-8zM11 1h5l3 2.500v8h-8z" fill="#e8f0f6" stroke="#7890a4"/></svg>
    <svg width="18" height="12"><path d="M.5 11.500V3l2.500-2h5.500v10.500zM8.500 11.500V1H14l3 2v8.500z" fill="#e8f0f6" stroke="#7890a4"/></svg>
  </div>
  <div class="w-[144px] h-4 pl-1 flex items-center gap-1 border-l border-[#a0a0a0]">
    <button aria-label="Zoom out"><svg width="13" height="13" class="block"><circle cx="6.500" cy="6.500" r="5.300" fill="#e4f0fa" stroke="#3c6890" stroke-width="1.300"/><path d="M4 6.500h5" stroke="#1c4870" stroke-width="1.500"/></svg></button>
    <svg width="99" height="13"><path d="M0 6.500h99M32.500 1v11M49.500 1v11" stroke="#8a8a8a"/><circle cx="49" cy="6.500" r="4" fill="#4a7ca4" stroke="#26486a"/></svg>
    <button aria-label="Zoom in"><svg width="13" height="13" class="block"><circle cx="6.500" cy="6.500" r="5.300" fill="#e4f0fa" stroke="#3c6890" stroke-width="1.300"/><path d="M4 6.500h5M6.500 4v5" stroke="#1c4870" stroke-width="1.500"/></svg></button>
  </div>
  <div class="w-[46px] pl-[3px] border-l border-[#a0a0a0]">100 %</div>
  <div class="absolute left-[13px] top-4 size-7 rounded-full border-2 border-[#4d7590] bg-[#b4cde0]" aria-hidden="true"></div>
</footer>

<!-- preferences window -->
<div role="dialog" aria-labelledby="prefs" class="absolute left-6 top-[527px] w-[666px] h-[368px] flex flex-col rounded-md border border-[#2c3848] bg-linear-to-r from-[#a3b4d4]/90 via-[#8ba0c8]/85 via-40% to-[#829bbf]/85 backdrop-blur-[3px] pl-1.5 pr-[5px] pb-1.5 shadow-[0_0_8px_2px_rgba(0,0,0,0.5),inset_0_0_0_1px_rgba(230,240,255,0.7)]">
  <div class="h-[27px] shrink-0 flex justify-end items-start"><button class="w-[47px] h-[19px] grid place-items-center rounded-b-md border border-t-0 border-[#5c6e8c] shadow-[inset_0_0_0_1px_rgba(220,230,250,0.5)]" aria-label="Close"><svg width="12" height="10" viewBox="0 0 12 10"><path d="M2 1l7 8M9 1L2 9" stroke="#3c4658" stroke-width="4"/><path d="M2 1l7 8M9 1L2 9" stroke="#fff" stroke-width="2.500"/></svg></button></div>
  <div class="flex-1 flex gap-5 pt-[11px] pl-5 pr-[21px] pb-5 bg-[#e0e6f4] border border-[#47536a] ring-1 ring-[#c8d6ee]">
    <div class="w-[120px] flex flex-col">
      <h2 id="prefs" class="h-5 font-bold">Preferences</h2>
      <ul class="flex-1 bg-white border border-[#8c8e98]">
        <li class="pl-px bg-[#3399ff] text-white">Separator</li>
        <li class="pl-px">Mouse Wheel</li>
        <li class="pl-px">Logging</li>
      </ul>
    </div>
    <div class="flex-1 min-w-0 mt-5 pt-[10px] pl-5 overflow-hidden border-2 border-t-[#808080] border-l-[#808080] border-r-white border-b-white whitespace-nowrap">
      <h3 class="h-7 font-bold">Format Seperator</h3>
      <div class="flex h-[30px]">
        <label class="w-[210px] h-4 flex items-center gap-1"><input type="checkbox" class="appearance-none size-[13px] border border-[#8c8f94] bg-linear-to-br from-[#c8ccd4] to-white shadow-[inset_0_0_0_1px_#f4f4f4]">Line</label>
        <label class="h-4 flex items-center gap-1"><input type="checkbox" class="appearance-none size-[13px] border border-[#8c8f94] bg-linear-to-br from-[#c8ccd4] to-white shadow-[inset_0_0_0_1px_#f4f4f4]">No Seperator</label>
      </div>
      <label class="w-fit h-5 pb-1 flex items-center gap-1"><input type="checkbox" class="appearance-none size-[13px] border border-[#8c8f94] bg-linear-to-br from-[#c8ccd4] to-white shadow-[inset_0_0_0_1px_#f4f4f4]">Color</label>
      <div class="pl-[22px]">
        <div class="h-5 flex items-center gap-1"><button aria-label="Color Font" class="w-8 h-4 rounded-xs border border-[#9a9da4] bg-[#999] shadow-[inset_0_0_0_1px_#dcdcdc]"></button>Color Font</div>
        <div class="h-5 flex items-center gap-1"><button aria-label="Color Background" class="w-8 h-4 rounded-xs border border-[#9a9da4] bg-[#eee]"></button>Color Background</div>
      </div>
      <label class="w-fit mt-2.5 h-4 flex items-center gap-1"><span class="grid"><input type="checkbox" checked class="col-start-1 row-start-1 appearance-none size-[13px] border border-[#8c8f94] bg-linear-to-br from-[#c8ccd4] to-white shadow-[inset_0_0_0_1px_#f4f4f4]"><svg class="col-start-1 row-start-1 pointer-events-none" width="13" height="13"><path d="M3.500 6l2.500 3.500L9.500 2.500" fill="none" stroke="#4a5f97" stroke-width="2"/></svg></span>User</label>
      <div class="h-[31px] pl-[22px] pt-[5px] flex items-start"><span class="w-[37px]">URL</span><button class="w-[58px] h-[18px] leading-4 mt-0.5 rounded-sm border border-[#707070] bg-linear-to-b from-[#f4f4f4] to-[#d0d0d0]">Selection</button></div>
      <p class="pl-[22px]">C:\Users\Homer\Documents\organon projekte\Bavaria blue.organon\icon10.png</p>
    </div>
  </div>
</div>

<script>
  const NS = 'http://www.w3.org/2000/svg';
  function add(parent, tag, attrs, text) {
    const el = document.createElementNS(NS, tag);
    for (const k in attrs) el.setAttribute(k, attrs[k]);
    if (text !== undefined) el.textContent = text;
    parent.appendChild(el);
  }
  const CM = 37.8;

  // horizontal ruler: origin at the left page margin
  const h = document.getElementById('hruler'), x0 = 76;
  add(h, 'rect', {x: .5, y: .5, width: 76, height: 17, fill: '#f0f0f0', stroke: '#9c9c9c'});
  add(h, 'rect', {x: x0, y: 1, width: 643, height: 17, fill: '#fff'});
  add(h, 'rect', {x: 719.5, y: .5, width: 74, height: 17, fill: '#f0f0f0', stroke: '#9c9c9c'});
  for (let q = -7; q <= 75; q++) {
    const x = Math.round(x0 + q * CM / 4);
    if (q === 0) continue;
    if (q % 4 === 0) add(h, 'text', {x: x, y: 14, 'text-anchor': 'middle'}, Math.abs(q / 4));
    else if (q % 2 === 0) add(h, 'rect', {x: x, y: 8, width: 1, height: 3});
    else add(h, 'rect', {x: x, y: 9, width: 1, height: 1});
  }
  for (let t = 1; t <= 13; t++) {
    const x = Math.round(x0 + t * 47.1);
    add(h, 'path', {d: `M${x - 2} 17.500h5M${x + .5} 14v3`, stroke: '#000'});
  }
  add(h, 'path', {d: 'M71.500.5h9v3l-4 5.500 4 5.500v3h-9v-3l4-5.500-4-5.500z', fill: '#f0f0f0', stroke: '#555'});
  add(h, 'path', {d: 'M714.500 17.500v-3l5-5.500 5 5.500v3z', fill: '#e4e4e4', stroke: '#777'});

  // vertical ruler
  const v = document.getElementById('vruler'), y0 = 54;
  add(v, 'rect', {x: 3, y: y0, width: 15, height: 900, fill: '#fff'});
  add(v, 'rect', {x: 2.5, y: -1, width: 16, height: y0, fill: '#f0f0f0', stroke: '#9c9c9c'});
  for (let q = -5; q <= 86; q++) {
    const y = Math.round(y0 + q * CM / 4);
    if (q === 0) continue;
    if (q % 4 === 0) add(v, 'text', {x: 0, y: 0, 'text-anchor': 'middle', transform: `translate(15 ${y}) rotate(-90)`}, Math.abs(q / 4));
    else if (q % 2 === 0) add(v, 'rect', {x: 9, y: y, width: 3, height: 1});
    else add(v, 'rect', {x: 10, y: y, width: 1, height: 1});
  }

  // separator texture: slanted crayon strokes from a fixed seed
  let seed = 7;
  const rnd = () => (seed = (seed * 16807) % 2147483647) / 2147483647;
  const g = document.getElementById('strokes');
  let light = '', dark = '';
  for (let i = 0; i < 2000; i++) {
    const x = (rnd() * 642).toFixed(1), y = (rnd() * 20).toFixed(1);
    const dx = (1 + rnd() * 3).toFixed(1), dy = -(1 + rnd() * 3).toFixed(1);
    const d = `M${x} ${y}l${dx} ${dy}`;
    if (i % 5 < 3) light += d; else dark += d;
  }
  add(g, 'path', {d: light, stroke: '#6842b4', 'stroke-width': 1});
  add(g, 'path', {d: dark, stroke: '#4a08d8', 'stroke-width': 1});
</script>
</body>
</html>
